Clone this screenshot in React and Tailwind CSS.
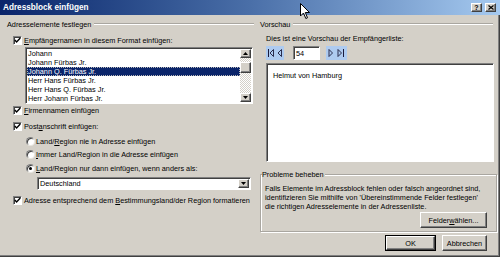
import React from "react";

const raised =
  "bg-[#d4d0c8] border border-t-white border-l-white border-r-[#404040] border-b-[#404040] shadow-[inset_-1px_-1px_0_#808080]";
const sunken =
  "bg-white border border-t-[#808080] border-l-[#808080] border-r-white border-b-white shadow-[inset_1px_1px_0_#404040]";

function Check({ checked = true }) {
  return (
    <span className={`w-[9px] h-[9px] shrink-0 flex items-center justify-center ${sunken}`}>
      {checked && (
        <svg width="7" height="7" viewBox="0 0 7 7">
          <path d="M0.8 3 L2.6 4.9 L6.3 1.1" stroke="black" strokeWidth="1.4" fill="none" />
        </svg>
      )}
    </span>
  );
}

function Radio({ checked = false }) {
  return (
    <span className="w-[9px] h-[9px] shrink-0 rounded-full bg-white border border-t-[#808080] border-l-[#808080] border-r-[#e8e6e0] border-b-[#e8e6e0] shadow-[inset_1px_1px_0_#404040] flex items-center justify-center">
      {checked && <span className="w-[3px] h-[3px] rounded-full bg-black" />}
    </span>
  );
}

function Header({ children, className = "" }) {
  return (
    <div className={`h-[10px] flex items-center ${className}`}>
      <span className="whitespace-nowrap">{children}</span>
      <span className="flex-1 ml-[3px] h-[2px] border-t border-t-[#a9a6a0] border-b border-b-white" />
    </div>
  );
}

const U = ({ children }) => <span className="underline">{children}</span>;

export default function App() {
  const rows = [
    "Johann",
    "Johann Fürbas Jr.",
    "Johann Q. Fürbas Jr.",
    "Herr Hans Fürbas Jr.",
    "Herr Hans Q. Fürbas Jr.",
    "Herr Johann Fürbas Jr.",
  ];
  return (
    <div
      className="relative w-[500px] h-[257px] overflow-hidden bg-[#d4d0c8] flex flex-col text-[7.3px] leading-[9px] text-black shadow-[inset_-1px_-1px_0_#404040,inset_-2px_-2px_0_#808080]"
      style={{ fontFamily: '"Liberation Sans", Arial, sans-serif' }}
    >
      {/* Title bar */}
      <div className="h-[15px] shrink-0 flex items-center bg-linear-to-r from-[#0a246a] via-[#4a6fa8] to-[#a6caf0] pl-[3px] pr-[4px]">
        <span className="text-white font-bold text-[8.2px] leading-[10px]">Adressblock einfügen</span>
        <div className="ml-auto flex gap-[3px]">
          <span className={`w-[11px] h-[9px] flex items-center justify-center font-bold text-[7px] leading-[7px] ${raised}`}>?</span>
          <span className={`w-[11px] h-[9px] flex items-center justify-center ${raised}`}>
            <svg width="6" height="5" viewBox="0 0 6 5">
              <path d="M0.5 0.5 L5.5 4.5 M5.5 0.5 L0.5 4.5" stroke="black" strokeWidth="1.2" />
            </svg>
          </span>
        </div>
      </div>

      <div className="flex flex-1 pl-[6px]">
        {/* Left column */}
        <div className="w-[248px] flex flex-col">
          <Header className="mt-[4px] pl-[1px]">Adresselemente festlegen</Header>

          <div className="mt-[6px] h-[10px] flex items-center pl-[7px] gap-[2px]">
            <Check />
            <span>
              <U>E</U>mpfängernamen in diesem Format einfügen:
            </span>
          </div>

          <div className={`mt-[2px] ml-[19px] w-[228px] h-[57px] flex ${sunken}`}>
            <div className="flex-1 flex flex-col pt-[1px] pl-[1px] min-w-0">
              {rows.map((r, i) => (
                <div
                  key={r}
                  className={`h-[9px] pl-[1px] whitespace-nowrap flex items-center ${
                    i === 2 ? "bg-[#0a246a] text-white outline outline-1 outline-dotted outline-[#b8b8b8] -outline-offset-1" : ""
                  }`}
                >
                  {r}
                </div>
              ))}
            </div>
            <div className="w-[11px] flex flex-col bg-[repeating-conic-gradient(#d4d0c8_0%_25%,#ffffff_0%_50%)] bg-[length:2px_2px] my-[1px] mr-[1px]">
              <span className={`h-[9px] flex items-center justify-center ${raised}`}>
                <svg width="5" height="3" viewBox="0 0 5 3"><path d="M2.5 0 L5 3 L0 3 Z" fill="black" /></svg>
              </span>
              <span className="h-[4px]" />
              <span className={`h-[11px] ${raised}`} />
              <span className="flex-1" />
              <span className={`h-[9px] flex items-center justify-center ${raised}`}>
                <svg width="5" height="3" viewBox="0 0 5 3"><path d="M0 0 L5 0 L2.5 3 Z" fill="black" /></svg>
              </span>
            </div>
          </div>

          <div className="mt-[1px] h-[10px] flex items-center pl-[7px] gap-[2px]">
            <Check />
            <span>
              <U>F</U>irmennamen einfügen
            </span>
          </div>

          <div className="mt-[6px] h-[10px] flex items-center pl-[7px] gap-[2px]">
            <Check />
            <span>
              Post<U>a</U>nschrift einfügen:
            </span>
          </div>

          <div className="mt-[5px] h-[10px] flex items-center pl-[20px] gap-[1px]">
            <Radio />
            <span>
              Land/<U>R</U>egion nie in Adresse einfügen
            </span>
          </div>
          <div className="mt-[3px] h-[10px] flex items-center pl-[20px] gap-[1px]">
            <Radio />
            <span>
              <U>I</U>mmer Land/Region in die Adresse einfügen
            </span>
          </div>
          <div className="mt-[4px] h-[10px] flex items-center pl-[20px] gap-[1px]">
            <Radio checked />
            <span>
              <U>L</U>and/Region nur dann einfügen, wenn anders als:
            </span>
          </div>

          <div className={`mt-[4px] ml-[31px] w-[214px] h-[13px] flex items-stretch ${sunken}`}>
            <span className="flex-1 flex items-center pl-[2px]">Deutschland</span>
            <span className={`w-[11px] m-[1px] flex items-center justify-center ${raised}`}>
              <svg width="5" height="3" viewBox="0 0 5 3"><path d="M0 0 L5 0 L2.5 3 Z" fill="black" /></svg>
            </span>
          </div>

          <div className="mt-[5px] h-[10px] flex items-center pl-[7px] gap-[2px] whitespace-nowrap">
            <Check />
            <span>
              Adresse entsprechend dem <U>B</U>estimmungsland/der Region formatieren
            </span>
          </div>
        </div>

        {/* Right column */}
        <div className="ml-[5px] w-[238px] flex flex-col">
          <Header className="mt-[4px] pl-[1px] pr-[4px]">Vorschau</Header>

          <div className="mt-[4px] h-[10px] flex items-center pl-[7px]">Dies ist eine Vorschau der Empfängerliste:</div>

          <div className="mt-[3px] h-[14px] flex pl-[7px]">
            <span className="w-[18px] h-[14px] bg-[#aecbf0] flex items-center">
              <svg width="18" height="14" viewBox="0 0 18 14">
                <path d="M2.5 3 L2.5 11" stroke="#1a1a3a" strokeWidth="1" />
                <path d="M7.5 3.5 L4 7 L7.5 10.5 Z" stroke="#1a1a3a" strokeWidth="0.9" fill="none" />
                <path d="M15.5 3.5 L12 7 L15.5 10.5 Z" stroke="#1a1a3a" strokeWidth="0.9" fill="none" />
              </svg>
            </span>
            <span className={`ml-[9px] w-[27px] h-[14px] flex items-center pl-[2px] ${sunken}`}>54</span>
            <span className="ml-[6px] w-[21px] h-[14px] bg-[#aecbf0] flex items-center">
              <svg width="21" height="14" viewBox="0 0 21 14">
                <path d="M3 3.5 L6.5 7 L3 10.5 Z" stroke="#1a1a3a" strokeWidth="0.9" fill="none" />
                <path d="M12 3.5 L15.5 7 L12 10.5 Z" stroke="#1a1a3a" strokeWidth="0.9" fill="none" />
                <path d="M17.5 3 L17.5 11" stroke="#1a1a3a" strokeWidth="1" />
              </svg>
            </span>
          </div>

          <div className={`mt-[3px] ml-[7px] w-[228px] h-[99px] pl-[6px] pt-[7px] ${sunken}`}>Helmut von Hamburg</div>

          <div className="relative mt-[12px] ml-[1px] w-[237px] h-[58px] border border-[#a9a6a0] shadow-[inset_1px_1px_0_white,1px_1px_0_white] flex flex-col pt-[9px] pl-[4px]">
            <span className="absolute -top-[5px] left-[1px] bg-[#d4d0c8] pr-[1px]">Probleme beheben</span>
            <div className="whitespace-nowrap">
              Falls Elemente im Adressblock fehlen oder falsch angeordnet sind,
              <br />
              identifizieren Sie mithilfe von 'Übereinstimmende Felder festlegen'
              <br />
              die richtigen Adresselemente in der Adressenliste.
            </div>
            <div className="mt-[1px] flex justify-end pr-[9px]">
              <span className={`w-[67px] h-[16px] flex items-center justify-center ${raised}`}>
                Felder <U>w</U>ählen...
              </span>
            </div>
          </div>

          <div className="mt-[3px] flex justify-end gap-[6px] pr-[10px]">
            <span className="w-[51px] h-[16px] border border-black flex">
              <span className={`flex-1 flex items-center justify-center ${raised}`}>OK</span>
            </span>
            <span className={`w-[45px] h-[16px] flex items-center justify-center ${raised}`}>Abbrechen</span>
          </div>
        </div>
      </div>

      {/* mouse cursor */}
      <svg className="absolute left-[300px] top-[3px]" width="11" height="17" viewBox="0 0 11 17">
        <path d="M0.5 0.5 L0.5 13 L3.5 10 L5.8 15.5 L7.5 14.8 L5.3 9.5 L9.5 9.5 Z" fill="white" stroke="black" strokeWidth="1" strokeLinejoin="miter" />
      </svg>
    </div>
  );
}
